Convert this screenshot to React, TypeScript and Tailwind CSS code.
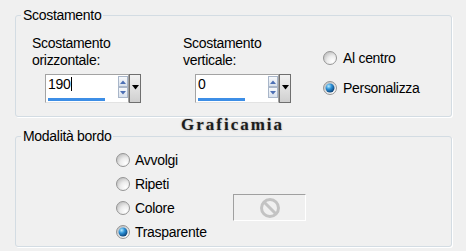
import React from "react";

function Radio({ checked = false }: { checked?: boolean }) {
  return (
    <svg width="14" height="14" viewBox="0 0 14 14" className="shrink-0">
      <defs>
        <radialGradient id="rbFill" cx="70%" cy="75%" r="75%">
          <stop offset="0" stopColor="#ffffff" />
          <stop offset="0.55" stopColor="#ececec" />
          <stop offset="1" stopColor="#c6c6c6" />
        </radialGradient>
        <radialGradient id="rbDot" cx="35%" cy="30%" r="75%">
          <stop offset="0" stopColor="#b8ecff" />
          <stop offset="0.45" stopColor="#2a8fd6" />
          <stop offset="1" stopColor="#0b3e72" />
        </radialGradient>
      </defs>
      <circle cx="7" cy="7" r="6.5" fill="url(#rbFill)" stroke="#969696" />
      {checked && <circle cx="7" cy="7" r="4.5" fill="url(#rbDot)" />}
    </svg>
  );
}

function SpinButton({ up }: { up?: boolean }) {
  return (
    <div className="flex h-[11px] w-[10px] items-center justify-center border border-[#a9b6c9] bg-gradient-to-b from-[#f7f9fc] to-[#d9e1ec]">
      <svg width="6" height="4" viewBox="0 0 6 4">
        <path d={up ? "M0 4 L3 0.5 L6 4 Z" : "M0 0 L3 3.5 L6 0 Z"} fill="#4c6fb4" />
      </svg>
    </div>
  );
}

function SpinBox({ value, bar, caret }: { value: string; bar: number; caret?: boolean }) {
  return (
    <div className="flex">
      <div className="flex h-[29px] w-[84px] flex-col border border-[#a3a3a3] border-b-[#e3e3e3] bg-white">
        <div className="flex flex-1">
          <div className="flex flex-1 items-start pl-[2px] pt-[1px]">
            <span>{value}</span>
            {caret && <span className="ml-[1px] mt-[1px] h-[14px] w-px bg-black" />}
          </div>
          <div className="flex flex-col pt-px">
            <SpinButton up />
            <SpinButton />
          </div>
        </div>
        <div className="mx-[2px] mb-px h-[3px] bg-[#3d8ee6]" style={{ width: bar }} />
      </div>
      <div className="flex h-[29px] w-[12px] justify-center border border-[#6f6f6f] bg-gradient-to-b from-[#f2f2f2] to-[#cfcfcf] pt-[10px]">
        <svg width="7" height="5" viewBox="0 0 7 5">
          <path d="M0 0 L7 0 L3.5 4.5 Z" fill="#000" />
        </svg>
      </div>
    </div>
  );
}

export default function App() {
  return (
    <div className="relative h-[251px] w-[466px] overflow-hidden bg-[#f0f0f0] pl-[15px] pt-[7px] font-['Liberation_Sans',Arial,sans-serif] text-[14px] leading-4 tracking-[-0.3px] text-black">
      <fieldset className="w-[437px] rounded-[3px] border border-[#d3dce3] pb-[13px] shadow-[1px_1px_0_#ffffff]">
        <legend className="ml-[5px] px-[2px]">Scostamento</legend>
        <div className="flex pl-[16px] pt-[12px]">
          <div className="w-[151px]">
            <p className="leading-[17px]">
              Scostamento
              <br />
              orizzontale:
            </p>
            <div className="ml-[13px] mt-[5px]">
              <SpinBox value="190" bar={57} caret />
            </div>
          </div>
          <div className="w-[140px]">
            <p className="leading-[17px]">
              Scostamento
              <br />
              verticale:
            </p>
            <div className="ml-[12px] mt-[5px]">
              <SpinBox value="0" bar={47} />
            </div>
          </div>
          <div className="flex flex-col gap-[14px] pt-[15px]">
            <label className="flex items-center gap-[6px]">
              <Radio />
              Al centro
            </label>
            <label className="flex items-center gap-[6px]">
              <Radio checked />
              Personalizza
            </label>
          </div>
        </div>
      </fieldset>

      <fieldset className="mt-[11px] w-[437px] rounded-[3px] border border-[#d3dce3] pb-[2px] shadow-[1px_1px_0_#ffffff]">
        <legend className="ml-[5px] px-[2px]">Modalità bordo</legend>
        <div className="flex pl-[100px] pt-[4px]">
          <div className="flex w-[117px] flex-col">
            {["Avvolgi", "Ripeti", "Colore", "Trasparente"].map((t) => (
              <label key={t} className="flex h-[24px] items-center gap-[5px]">
                <Radio checked={t === "Trasparente"} />
                {t}
              </label>
            ))}
          </div>
          <div className="mt-[46px] flex h-[27px] w-[73px] items-center justify-center border border-[#a0a0a0] border-b-white border-r-white bg-[#f0f0f0]">
            <svg width="22" height="22" viewBox="0 0 22 22">
              <circle cx="11" cy="11" r="8.5" fill="none" stroke="#c3c3c3" strokeWidth="3" />
              <path d="M5 5 L17 17" stroke="#c3c3c3" strokeWidth="3" />
            </svg>
          </div>
        </div>
      </fieldset>

      <div className="absolute left-[181px] top-[115px] font-['Liberation_Serif',serif] text-[17px] font-bold leading-5 tracking-[2px] text-[#1c1c1c] [text-shadow:0_0_2px_#a0a0a0]">
        Graficamia
      </div>
    </div>
  );
}
